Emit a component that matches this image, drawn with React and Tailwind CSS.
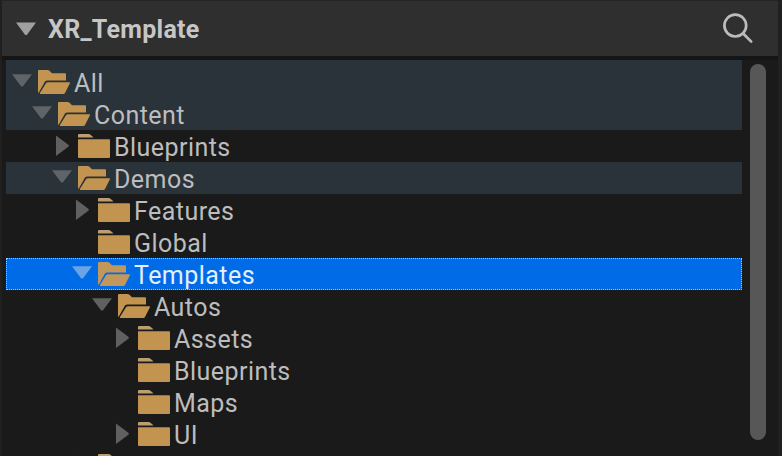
const rows = [
  { name: 'All', depth: 0, state: 'open', lit: true },
  { name: 'Content', depth: 1, state: 'open', lit: true },
  { name: 'Blueprints', depth: 2, state: 'closed' },
  { name: 'Demos', depth: 2, state: 'open', lit: true },
  { name: 'Features', depth: 3, state: 'closed' },
  { name: 'Global', depth: 3, state: 'leaf' },
  { name: 'Templates', depth: 3, state: 'open', selected: true },
  { name: 'Autos', depth: 4, state: 'open' },
  { name: 'Assets', depth: 5, state: 'closed' },
  { name: 'Blueprints', depth: 5, state: 'leaf' },
  { name: 'Maps', depth: 5, state: 'leaf' },
  { name: 'UI', depth: 5, state: 'closed' },
  { name: '', depth: 3, state: 'closed' },
];

function Arrow({ state, color }) {
  return (
    <svg className="w-[26px] h-8 shrink-0" viewBox="0 0 26 32" fill={color}>
      {state === 'open' && <path d="M0 8.3H20L10.8 20.6H9.2Z" />}
      {state === 'closed' && <path d="M4 5.5L16.7 15V16.6L4 26Z" />}
    </svg>
  );
}

function Folder({ open, selected }) {
  const fill = selected ? '#c1975c' : '#c2944f';
  return (
    <svg className="w-9 h-8 shrink-0" viewBox="0 0 36 32" fill={fill}>
      {open ? (
        <>
          <path d="M0 5Q0 4 1 4H9.5Q10.5 4 11.2 4.6L14 7.2H27Q28 7.2 28 8.2V14.4H9.5Q7.8 14.4 7 15.6L0.8 26.4H0Z" />
          <path d="M9.8 16.2H31.2Q32.4 16.2 31.9 17.2L27 27Q26.4 28 25.4 28H2.4Q1.4 28 1.9 27L8 17.2Q8.7 16.2 9.8 16.2Z" />
        </>
      ) : (
        <>
          <path d="M0 5Q0 4 1 4H10.5Q11.5 4 12.2 4.6L15.6 7.6H0Z" fill="#bd9e70" />
          <path d="M0 9.3H31Q32 9.3 32 10.3V27Q32 28 31 28H1Q0 28 0 27Z" />
        </>
      )}
    </svg>
  );
}

function Row({ row }) {
  const { name, depth, state, lit, selected } = row;
  const bg = selected ? 'bg-[#006be6]' : lit ? 'bg-[#2a323a]' : '';
  return (
    <div
      className={`relative flex h-8 shrink-0 items-center ${bg} ${selected ? 'text-[#e4efff]' : 'text-[#bdbdbd]'}`}
      style={{ paddingLeft: 6 + depth * 20 }}
    >
      <Arrow state={state} color={selected ? '#6ba4e5' : lit ? '#5f6468' : '#606060'} />
      <Folder open={state === 'open'} selected={selected} />
      <span className="pt-1 text-[25px] leading-8 tracking-[0.45px]">{name}</span>
      {selected && <div className="absolute inset-0 border border-dotted border-[#b4c4c8]" />}
    </div>
  );
}

export default function App() {
  return (
    <div className="flex h-[456px] w-[782px] flex-col overflow-hidden border-l-2 border-r-4 border-[#202020] bg-[#1a1a1a] font-['Roboto',sans-serif]">
      <header className="flex h-14 shrink-0 items-center border-t border-[#252525] bg-[#2f2f2f] pl-3.5">
        <svg className="h-3.5 w-5 shrink-0" viewBox="0 0 20 14" fill="#a0a0a0">
          <path d="M0 0.5H20L10.8 13H9.2Z" />
        </svg>
        <h1 className="ml-3 pt-0.5 text-[25px] leading-8 font-bold tracking-[0.28px] text-[#c6c6c6]">XR_Template</h1>
        <svg className="mr-6 ml-auto h-8 w-8" viewBox="0 0 32 32" fill="none" stroke="#bcbcbc" strokeWidth="2.7" strokeLinecap="round">
          <circle cx="13.3" cy="12.6" r="10.9" />
          <path d="M21.4 20.8L29.2 28.6" />
        </svg>
      </header>
      <main className="flex min-h-0 flex-1 border-t-4 border-[#151515] pl-1">
        <div className="flex w-[736px] flex-col overflow-hidden">
          <div className="h-1.5 shrink-0 bg-[#2a323a]" />
          {rows.map((row, i) => (
            <Row key={i} row={row} />
          ))}
        </div>
        <div className="mt-1 ml-2 h-[376px] w-4 rounded-full bg-[#575757]" />
      </main>
    </div>
  );
}
